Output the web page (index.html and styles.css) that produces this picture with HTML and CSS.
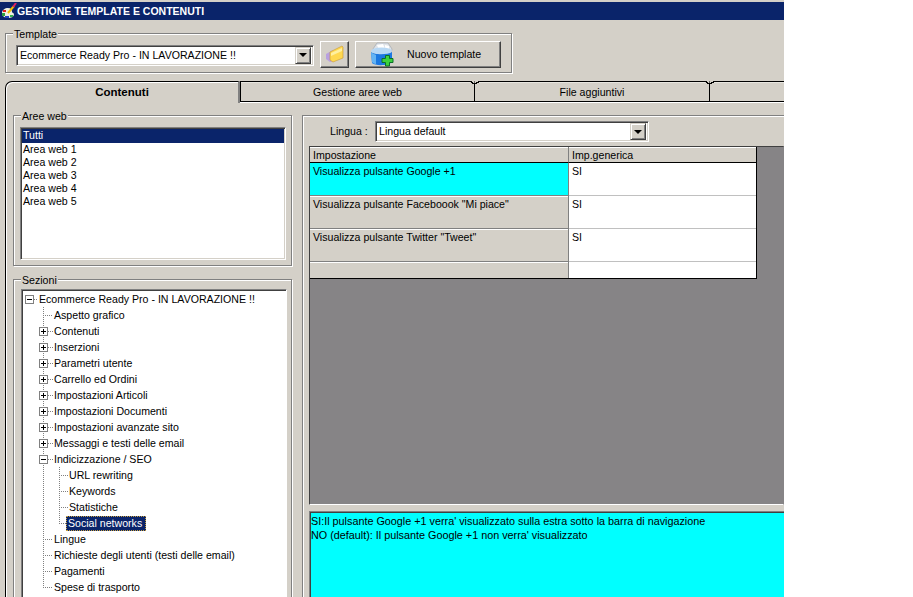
FILE: index.html
```html
<!DOCTYPE html>
<html lang="it">
<head>
<meta charset="utf-8">
<title>Gestione template e contenuti</title>
<link rel="stylesheet" href="styles.css">
</head>
<body>
<div class="window">
  <div class="titlebar">
    <svg class="app-icon" width="16" height="16" viewBox="0 0 16 16">
      <path d="M1 10 C1 7 4 5 7 5 C10 5 11 7 11 9 C11 10 13 10 13 11 C13 14 10 15 7 15 C4 15 1 13 1 10Z" fill="#f0f0e0"/>
      <rect x="2" y="7" width="3" height="2" fill="#e02020"/>
      <rect x="1" y="10" width="3" height="3" fill="#30a040"/>
      <rect x="4" y="13" width="4" height="2" fill="#2040c0"/>
      <rect x="9" y="12" width="3" height="2" fill="#30b050"/>
      <path d="M7 10 L13 3" stroke="#f0c000" stroke-width="2"/>
      <path d="M12 4 L15 0" stroke="#e02060" stroke-width="2"/>
    </svg>
    <span>GESTIONE TEMPLATE E CONTENUTI</span>
  </div>

  <div class="toolbar">
    <div class="group template-group">
      <div class="legend">Template</div>
      <div class="template-row">
        <div class="combo template-combo">
          <span class="combo-text">Ecommerce Ready Pro - IN LAVORAZIONE !!</span>
          <span class="combo-btn"><i class="arrow"></i></span>
        </div>
        <button class="btn folder-btn" type="button">
          <svg width="20" height="20" viewBox="0 0 20 20">
            <path d="M1 9 L8 5 L9 16 L5 17 L1 14Z" fill="#b8a0e0"/>
            <path d="M5 7 L17 1 L18 2 L18 13 L8 17 L5 15Z" fill="#ffd850" stroke="#c89830" stroke-width=".6"/>
            <path d="M6 8 L17 3 L17 6 L6 11Z" fill="#fff0a0"/>
          </svg>
        </button>
        <button class="btn new-btn" type="button">
          <svg width="24" height="25" viewBox="0 0 24 25">
            <path d="M3 7 L7 1 L18 1 L22 7 L21 12 L4 12Z" fill="#dfe3e8" stroke="#98a0a8" stroke-width=".6"/>
            <path d="M7 3 L13 2 L15 7 L9 8Z" fill="#fff"/>
            <path d="M15 3 L19 4 L19 8 L15 7Z" fill="#fff"/>
            <ellipse cx="11.500" cy="9" rx="10.500" ry="3.500" fill="#b8d8f4"/>
            <path d="M1 10 C4 13 18 13 22 10 L22 20 C18 24 5 24 2 21Z" fill="#1c78e0"/>
            <path d="M1 10 C3 12 5 12 6 13 L6 22 C4 22 3 21 2 20Z" fill="#64b4f4"/>
            <path d="M15.500 13.500 H19.500 V16.500 H23 V20.500 H19.500 V24 H15.500 V20.500 H12 V16.500 H15.500Z" fill="#3cd23c" stroke="#0c6e28"/>
          </svg>
          <span class="new-label">Nuovo template</span>
        </button>
      </div>
    </div>
  </div>

  <div class="tabs">
    <div class="tab tab-active">Contenuti</div>
    <div class="tab tab-gestione">Gestione aree web</div>
    <div class="tab tab-file">File aggiuntivi</div>
    <div class="tab tab-rest"></div>
  </div>

  <div class="page">
    <div class="left-col">
      <div class="group aree-group">
        <div class="legend">Aree web</div>
        <ul class="listbox">
          <li class="list-item list-selected">Tutti</li>
          <li class="list-item">Area web 1</li>
          <li class="list-item">Area web 2</li>
          <li class="list-item">Area web 3</li>
          <li class="list-item">Area web 4</li>
          <li class="list-item">Area web 5</li>
        </ul>
      </div>
      <div class="group sezioni-group">
        <div class="legend">Sezioni</div>
        <div class="treebox">
          <div class="tree-root"><i class="exp exp-open"></i><i class="stub stub-root"></i><span class="label">Ecommerce Ready Pro - IN LAVORAZIONE !!</span></div>
          <ul class="tree">
            <li class="node"><div class="row"><i class="stub stub-long"></i><span class="label">Aspetto grafico</span></div></li>
            <li class="node"><div class="row"><i class="exp"></i><i class="stub"></i><span class="label">Contenuti</span></div></li>
            <li class="node"><div class="row"><i class="exp"></i><i class="stub"></i><span class="label">Inserzioni</span></div></li>
            <li class="node"><div class="row"><i class="exp"></i><i class="stub"></i><span class="label">Parametri utente</span></div></li>
            <li class="node"><div class="row"><i class="exp"></i><i class="stub"></i><span class="label">Carrello ed Ordini</span></div></li>
            <li class="node"><div class="row"><i class="exp"></i><i class="stub"></i><span class="label">Impostazioni Articoli</span></div></li>
            <li class="node"><div class="row"><i class="exp"></i><i class="stub"></i><span class="label">Impostazioni Documenti</span></div></li>
            <li class="node"><div class="row"><i class="exp"></i><i class="stub"></i><span class="label">Impostazioni avanzate sito</span></div></li>
            <li class="node"><div class="row"><i class="exp"></i><i class="stub"></i><span class="label">Messaggi e testi delle email</span></div></li>
            <li class="node">
              <div class="row"><i class="exp exp-open"></i><i class="stub"></i><span class="label">Indicizzazione / SEO</span></div>
              <ul class="tree tree-sub">
                <li class="node"><div class="row"><i class="stub stub-sub"></i><span class="label">URL rewriting</span></div></li>
                <li class="node"><div class="row"><i class="stub stub-sub"></i><span class="label">Keywords</span></div></li>
                <li class="node"><div class="row"><i class="stub stub-sub"></i><span class="label">Statistiche</span></div></li>
                <li class="node node-last"><div class="row"><i class="stub stub-sub"></i><span class="label label-selected">Social networks</span></div></li>
              </ul>
            </li>
            <li class="node"><div class="row"><i class="stub stub-long"></i><span class="label">Lingue</span></div></li>
            <li class="node"><div class="row"><i class="stub stub-long"></i><span class="label">Richieste degli utenti (testi delle email)</span></div></li>
            <li class="node"><div class="row"><i class="stub stub-long"></i><span class="label">Pagamenti</span></div></li>
            <li class="node node-last"><div class="row"><i class="stub stub-long"></i><span class="label">Spese di trasporto</span></div></li>
          </ul>
        </div>
      </div>
    </div>

    <div class="right-col">
      <div class="lingua-row">
        <span class="lingua-label">Lingua :</span>
        <div class="combo lingua-combo">
          <span class="combo-text">Lingua default</span>
          <span class="combo-btn"><i class="arrow"></i></span>
        </div>
      </div>
      <div class="grid-area">
        <table class="grid">
          <colgroup><col class="col-a"><col class="col-b"></colgroup>
          <thead>
            <tr><th>Impostazione</th><th>Imp.generica</th></tr>
          </thead>
          <tbody>
            <tr class="grid-row"><td class="cell-key cell-active">Visualizza pulsante Google +1</td><td class="cell-val">SI</td></tr>
            <tr class="grid-row"><td class="cell-key">Visualizza pulsante Faceboook "Mi piace"</td><td class="cell-val">SI</td></tr>
            <tr class="grid-row"><td class="cell-key">Visualizza pulsante Twitter "Tweet"</td><td class="cell-val">SI</td></tr>
            <tr class="grid-row-empty"><td class="cell-key"></td><td class="cell-val"></td></tr>
          </tbody>
        </table>
      </div>
      <div class="description">
        <p>SI:Il pulsante Google +1 verra' visualizzato sulla estra sotto la barra di navigazione</p>
        <p>NO (default): Il pulsante Google +1 non verra' visualizzato</p>
      </div>
    </div>
  </div>
</div>
</body>
</html>
```

FILE: styles.css
```css
* { box-sizing: border-box; }
html, body { margin: 0; padding: 0; background: #fff; overflow: hidden; }
body { font: 10.6px/13px "Liberation Sans", Arial, sans-serif; color: #000; }
ul { list-style: none; margin: 0; padding: 0; }
p { margin: 0; }
i { display: block; }

.window { width: 784px; height: 597px; background: #d4d0c8; overflow: hidden; padding-top: 2px; }

.titlebar { height: 18px; background: #0a246a; color: #fff; display: flex; align-items: center; padding-left: 1px; font: bold 10.5px/18px "Liberation Sans", sans-serif; }
.app-icon { flex: none; }

.toolbar { padding: 13px 0 0 5px; }

.group { border: 1px solid #808080; box-shadow: 1px 1px 0 #fff, inset 1px 1px 0 #fff; }
.legend { width: fit-content; height: 12px; margin: -6px 0 0 7px; padding: 0 1px; background: #d4d0c8; }

.template-group { width: 507px; height: 40px; }
.template-row { display: flex; align-items: center; padding: 1px 0 0 10px; }

.combo { display: flex; align-items: center; background: #fff; border: 1px solid; border-color: #808080 #fff #fff #808080; box-shadow: inset 1px 1px 0 #404040, inset -1px -1px 0 #d4d0c8; padding: 2px; height: 21px; }
.combo-text { flex: 1; padding-left: 1px; white-space: nowrap; overflow: hidden; }
.combo-btn { flex: none; width: 16px; height: 17px; background: #d4d0c8; border: 1px solid; border-color: #d4d0c8 #404040 #404040 #d4d0c8; box-shadow: inset 1px 1px 0 #fff, inset -1px -1px 0 #808080; display: flex; align-items: center; justify-content: center; }
.arrow { width: 0; height: 0; border: 4px solid transparent; border-top: 4px solid #000; border-bottom: 0; }
.template-combo { width: 298px; margin-top: 1px; }

.btn { display: flex; align-items: center; height: 27px; padding: 0; background: #d4d0c8; border: 1px solid; border-color: #fff #404040 #404040 #fff; box-shadow: inset -1px -1px 0 #808080; font: inherit; color: #000; }
.folder-btn { width: 29px; margin-left: 6px; justify-content: center; }
.new-btn { width: 146px; margin-left: 6px; padding-left: 14px; }
.new-label { margin-left: 13px; }

.tabs { display: flex; align-items: flex-start; margin: 8px 0 0 5px; height: 22px; }
.tab { height: 21px; text-align: center; line-height: 20px; background: #d4d0c8; border-top: 1px solid #000; border-bottom: 1px solid #000; border-right: 1px solid #000; box-shadow: 0 1px 0 #fff, inset 0 1px 0 #e8e6e0; position: relative; }
.tab-active { width: 235px; height: 22px; border: 0; border-top: 1px solid #000; border-left: 1px solid #000; border-right: 2px solid #808080; border-top-left-radius: 7px; font-weight: bold; font-size: 11.5px; line-height: 21px; box-shadow: inset 1px 1px 0 #fff; z-index: 1; }
.tab-gestione { width: 235px; border-left: 1px solid #000; }
.tab-file { width: 235px; }
.tab-rest { flex: 1; border-right: 0; }
.tab-gestione::after, .tab-file::after { content: ""; position: absolute; right: -5px; top: -1px; width: 9px; height: 3px; background: linear-gradient(to bottom left, #d4d0c8 0 40%, #000 40% 65%, #d4d0c8 65%) left / 50% 100% no-repeat, linear-gradient(to bottom right, #d4d0c8 0 40%, #000 40% 65%, #d4d0c8 65%) right / 50% 100% no-repeat; z-index: 2; }

.page { display: flex; height: 494px; margin-left: 5px; padding: 12px 0 0 7px; border-left: 1px solid #000; box-shadow: inset 1px 0 0 #fff; }
.left-col { width: 279px; flex: none; }

.aree-group { height: 151px; }
.listbox { width: 266px; height: 133px; margin: 5px 0 0 6px; background: #fff; border: 1px solid; border-color: #808080 #fff #fff #808080; box-shadow: inset 1px 1px 0 #404040, inset -1px -1px 0 #d4d0c8; padding: 1px 1px 0 1px; }
.list-item { height: 13px; padding-left: 1px; line-height: 13px; }
.list-selected { height: 14px; background: #0a246a; color: #fff; }

.sezioni-group { height: 340px; margin-top: 13px; }
.treebox { width: 266px; height: 310px; margin: 3px 0 0 7px; background: #fff; border: 1px solid; border-color: #808080 #fff #fff #808080; box-shadow: inset 1px 1px 0 #404040; padding: 1px 0 0 5px; overflow: hidden; }

.tree-root { display: flex; align-items: center; height: 16px; padding-left: 2px; }
.tree { margin-left: 16px; }
.tree-sub { margin-left: 16px; }
.row { display: flex; align-items: center; height: 16px; }
.node { background: repeating-linear-gradient(#808080 0 1px, transparent 1px 2px) 0 0 / 1px 100% no-repeat; }
.node-last { background-size: 1px 8px; }
.exp { width: 9px; height: 9px; margin-left: -4px; flex: none; border: 1px solid #808080; background: linear-gradient(#000, #000) center / 5px 1px no-repeat, linear-gradient(#000, #000) center / 1px 5px no-repeat, #fff; }
.exp-open { background: linear-gradient(#000, #000) center / 5px 1px no-repeat, #fff; }
.stub { height: 1px; width: 5px; flex: none; background: repeating-linear-gradient(90deg, #808080 0 1px, transparent 1px 2px); }
.stub-root { width: 4px; }
.stub-long { width: 10px; }
.stub-sub { width: 9px; }
.label { padding: 0 1px; height: 15px; line-height: 15px; white-space: nowrap; }
.label-selected { background: #0a246a; color: #fff; outline: 1px dotted #c8a040; outline-offset: -1px; margin-left: -2px; padding: 0 4px 0 2px; }

.right-col { flex: none; width: 482px; height: 482px; margin-left: 10px; border: 1px solid #808080; border-right: 0; border-bottom: 0; box-shadow: inset 1px 1px 0 #fff; padding: 5px 0 0 6px; }
.lingua-row { display: flex; align-items: center; height: 21px; }
.lingua-label { width: 45px; margin-left: 21px; }
.lingua-combo { width: 274px; }

.grid-area { height: 359px; margin-top: 4px; background: #868486; border: 1px solid; border-color: #404040 transparent #fff #404040; }
.grid { width: 447px; table-layout: fixed; border-collapse: separate; border-spacing: 0; border-right: 1px solid #000; border-bottom: 1px solid #000; background: #fff; }
.col-a { width: 259px; }
.grid th { height: 16px; padding: 1px 0 0 3px; font-weight: normal; text-align: left; background: #d4d0c8; border-bottom: 1px solid #000; border-right: 1px solid #808080; box-shadow: inset 0 1px 0 #fff; vertical-align: middle; }
.grid th:last-child { border-right: 0; }
.grid td { padding: 2px 0 0 3px; vertical-align: top; border-bottom: 1px solid #c0c0c0; line-height: 13px; }
.grid-row td { height: 33px; }
.grid-row-empty td { height: 16px; border-bottom: 0; }
.grid .cell-key { background: #d4d0c8; border-right: 1px solid #808080; border-bottom-color: #808080; box-shadow: inset 0 1px 0 #fff; }
.grid .cell-active { background: #0ff; box-shadow: none; }

.description { height: 90px; margin-top: 6px; background: #0ff; border-top: 1px solid #808080; border-left: 1px solid #808080; box-shadow: inset 1px 1px 0 #404040; padding: 2px 0 0 1px; line-height: 14px; font-size: 10.8px; }
```
